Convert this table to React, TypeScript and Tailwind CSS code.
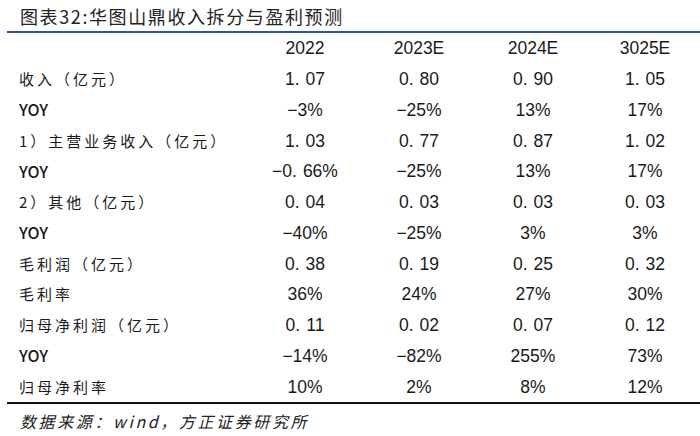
import React from "react";

const cjk = { fontFamily: '"Noto Sans CJK SC", "Noto Sans", sans-serif' };
const num = { fontFamily: '"Liberation Sans", Arial, "Noto Sans CJK SC", sans-serif' };

const header = ["2022", "2023E", "2024E", "3025E"];

const rows: { label: string; values: string[] }[] = [
  { label: "收入（亿元）", values: ["1.07", "0.80", "0.90", "1.05"] },
  { label: "YOY", values: ["−3%", "−25%", "13%", "17%"] },
  { label: "1）主营业务收入（亿元）", values: ["1.03", "0.77", "0.87", "1.02"] },
  { label: "YOY", values: ["−0.66%", "−25%", "13%", "17%"] },
  { label: "2）其他（亿元）", values: ["0.04", "0.03", "0.03", "0.03"] },
  { label: "YOY", values: ["−40%", "−25%", "3%", "3%"] },
  { label: "毛利润（亿元）", values: ["0.38", "0.19", "0.25", "0.32"] },
  { label: "毛利率", values: ["36%", "24%", "27%", "30%"] },
  { label: "归母净利润（亿元）", values: ["0.11", "0.02", "0.07", "0.12"] },
  { label: "YOY", values: ["−14%", "−82%", "255%", "73%"] },
  { label: "归母净利率", values: ["10%", "2%", "8%", "12%"] },
];

// numbers in the source are set with a wide decimal point
const Num: React.FC<{ v: string }> = ({ v }) => {
  const parts = v.split(".");
  if (parts.length === 1) return <>{v}</>;
  return (
    <>
      {parts[0]}
      <span className="mr-[6px]">.</span>
      {parts[1]}
    </>
  );
};

const Label: React.FC<{ text: string }> = ({ text }) =>
  text === "YOY" ? (
    <span style={cjk} className="text-[16px] font-medium">
      YOY
    </span>
  ) : (
    <span style={cjk} className="text-[15px] tracking-[3px]">
      {text}
    </span>
  );

export default function App() {
  return (
    <div className="w-[700px] h-[436px] bg-white text-[#1a1a1a] overflow-hidden">
      {/* title */}
      <div className="h-[31px] flex items-center pl-[20px] pt-[2px]">
        <span style={cjk} className="text-[18px] tracking-[1.6px] text-[#222]">
          图表32:华图山鼎收入拆分与盈利预测
        </span>
      </div>
      <div className="ml-[7px] h-[2px] bg-[#2f5597]" />

      {/* table */}
      <div className="ml-[7px] grid grid-cols-[241px_114px_114px_114px_110px] auto-rows-[30.75px] items-center">
        <div />
        {header.map((h) => (
          <div key={h} style={num} className="text-center text-[17.5px]">
            {h}
          </div>
        ))}
        {rows.map((r, i) => (
          <React.Fragment key={i}>
            <div className="pl-[12px] whitespace-nowrap">
              <Label text={r.label} />
            </div>
            {r.values.map((v, j) => (
              <div key={j} style={num} className="text-center text-[17.5px]">
                <Num v={v} />
              </div>
            ))}
          </React.Fragment>
        ))}
      </div>
      <div className="ml-[7px] h-[2px] bg-[#111]" />

      {/* source */}
      <div className="h-[33px] flex items-center pl-[20px]">
        <span style={cjk} className="italic text-[16px] tracking-[2.6px] text-[#222]">
          数据来源：wind，方正证券研究所
        </span>
      </div>
    </div>
  );
}
